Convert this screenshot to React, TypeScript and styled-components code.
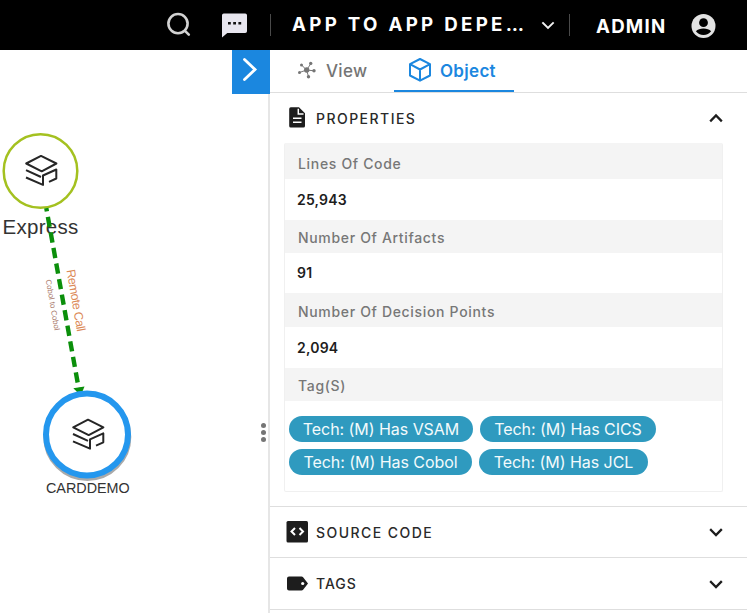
import React, { useState } from "react";
import styled, { createGlobalStyle } from "styled-components";

const GlobalStyle = createGlobalStyle`
  * { box-sizing: border-box; }
  body { margin: 0; background: #fff; font-family: Inter, "Open Sans", sans-serif; }
  svg { display: block; flex: none; }
  button { border: 0; padding: 0; background: none; font: inherit; color: inherit; }
`;

const Page = styled.div`
  width: 747px;
  height: 613px;
  display: flex;
  flex-direction: column;
  overflow: hidden;
`;

const TopBar = styled.header`
  flex: none;
  height: 50px;
  display: flex;
  align-items: center;
  padding-left: 165px;
  background: #000;
  color: #fff;
`;

const Separator = styled.span<{ $left: number; $right: number }>`
  width: 1px;
  height: 22px;
  margin: 0 ${(p) => p.$right}px 0 ${(p) => p.$left}px;
  background: #4a4a4a;
`;

const BarText = styled.span<{ $spacing: number; $width: number; $drop?: number }>`
  width: ${(p) => p.$width}px;
  padding-top: ${(p) => p.$drop ?? 0}px;
  font-size: 18.7px;
  font-weight: 700;
  line-height: 24px;
  letter-spacing: ${(p) => p.$spacing}px;
  white-space: nowrap;
`;

const Ellipsis = styled.span`
  letter-spacing: -0.2px;
`;

const ChatSlot = styled.span`
  margin-left: 29px;
`;

const Body = styled.main`
  flex: 1;
  min-height: 0;
  display: flex;
`;

const Canvas = styled.section`
  width: 232px;
  flex: none;
`;

const Gutter = styled.div`
  width: 38px;
  flex: none;
  display: flex;
  flex-direction: column;
  align-items: flex-end;
`;

const Collapse = styled.button`
  width: 38px;
  height: 44px;
  display: flex;
  align-items: center;
  justify-content: center;
  padding: 0 2px 4px 0;
  background: #1b87df;
`;

const Handle = styled.div`
  flex: 1;
  width: 15px;
  border-right: 2px solid #e6e6e6;
  padding: 329px 0 0 6px;
  display: flex;
  flex-direction: column;
  gap: 2px;
`;

const Dot = styled.i`
  width: 5px;
  height: 5px;
  flex: none;
  border-radius: 50%;
  background: #757575;
`;

const Panel = styled.aside`
  flex: 1;
  min-width: 0;
  display: flex;
  flex-direction: column;
`;

const Tabs = styled.nav`
  height: 43px;
  flex: none;
  display: flex;
  padding-left: 16px;
  border-bottom: 1px solid #dedede;
`;

const Tab = styled.button<{ $active?: boolean; $width: number }>`
  width: ${(p) => p.$width}px;
  height: 42px;
  display: flex;
  align-items: center;
  gap: ${(p) => (p.$active ? 8 : 9)}px;
  padding-left: ${(p) => (p.$active ? 14 : 11)}px;
  border-bottom: 2px solid ${(p) => (p.$active ? "#1b87df" : "transparent")};
  color: ${(p) => (p.$active ? "#1b87df" : "#757575")};
  font-size: 17px;
  font-weight: ${(p) => (p.$active ? 600 : 500)};
  letter-spacing: 0.3px;
`;

const TabText = styled.span`
  padding-top: 2px;
`;

const SectionHead = styled.button<{ $height: number; $ruled?: boolean }>`
  width: 100%;
  height: ${(p) => p.$height}px;
  flex: none;
  display: flex;
  align-items: center;
  padding: 0 24.5px 0 16px;
  border-top: ${(p) => (p.$ruled ? "1px solid #dedede" : "0")};
  color: #2a2a2a;
  text-align: left;
`;

const SectionIcon = styled.span`
  width: 30px;
  display: flex;
`;

const SectionTitle = styled.span<{ $spacing: number }>`
  flex: 1;
  font-size: 14px;
  font-weight: 500;
  letter-spacing: ${(p) => p.$spacing}px;
`;

const Table = styled.dl`
  width: 439px;
  height: 349px;
  flex: none;
  margin: 0 0 14px 14px;
  border: 1px solid #f0f0f0;
  border-top: 0;
  border-radius: 2px;
`;

const Label = styled.dt<{ $height: number }>`
  height: ${(p) => p.$height}px;
  padding-left: 13px;
  padding-bottom: 4px;
  display: flex;
  align-items: flex-end;
  line-height: 22px;
  background: #f4f4f4;
  color: #777;
  font-size: 14px;
  font-weight: 500;
  letter-spacing: 0.67px;
`;

const Value = styled.dd<{ $height: number }>`
  height: ${(p) => p.$height}px;
  margin: 0;
  padding: 0 0 0 12px;
  display: flex;
  align-items: center;
  color: #1d1d1d;
  font-size: 14px;
  font-weight: 600;
  letter-spacing: 0.2px;
`;

const TagList = styled.dd`
  margin: 0;
  padding: 15px 0 0 4px;
  display: grid;
  gap: 7px;
`;

const TagRow = styled.div`
  display: flex;
  gap: 7px;
`;

const Tag = styled.span<{ $width: number }>`
  width: ${(p) => p.$width}px;
  height: 26px;
  border-radius: 13px;
  background: #2f9abf;
  color: #f3fafc;
  font-size: 16px;
  line-height: 26px;
  letter-spacing: -0.05px;
  text-align: center;
  white-space: nowrap;
`;

const SearchIcon = () => (
  <svg width="28" height="28" viewBox="0 0 28 28" fill="none" stroke="#d2d2d2" strokeWidth="2.6" strokeLinecap="round">
    <circle cx="13" cy="12.6" r="9.6" />
    <path d="M20 19.800l3.800 3.800" />
  </svg>
);

const ChatIcon = () => (
  <svg width="25" height="25" viewBox="0 0 25 25">
    <path d="M1.8.5h21.4a1.8 1.8 0 0 1 1.8 1.8v15.9a1.8 1.8 0 0 1-1.8 1.8H5.3L0 24.4V2.300A1.800 1.800 0 0 1 1.800.500z" fill="#e8e6ef" />
    <path d="M6 9h2.800v2.500H6zM11.200 9H14v2.500h-2.800zM16.400 9h2.800v2.500h-2.800z" fill="#111" />
  </svg>
);

const UserIcon = () => (
  <svg width="25" height="25" viewBox="0 0 25 25">
    <circle cx="12.500" cy="13" r="12" fill="#e2e2e2" />
    <circle cx="12.500" cy="9.700" r="4.400" fill="#000" />
    <path d="M4.900 18.200C6.500 16.400 9.300 15.600 12.500 15.600s6 .8 7.600 2.600c-1.700 2.300-4.400 3.800-7.600 3.800s-5.900-1.500-7.600-3.800z" fill="#000" />
  </svg>
);

const Chevron = ({ up, size = 14, color = "#1d1d1d", weight = 2.3 }: { up?: boolean; size?: number; color?: string; weight?: number }) => (
  <svg width={size} height={10} viewBox="0 0 14 10" fill="none" stroke={color} strokeWidth={weight} strokeLinecap="square">
    <path d={up ? "M2 7.500l5-5 5 5" : "M2 3l5 5 5-5"} />
  </svg>
);

const HubIcon = () => (
  <svg width="20" height="18" viewBox="0 0 20 18" stroke="#757575" fill="#757575" strokeWidth="1">
    <path d="M9.500 9L4.600 4M9.500 9L14 2.500M9.500 9L2.500 11.500M9.500 9l7.500.8M9.500 9l2 6.500" />
    <g stroke="none">
      <circle cx="9.700" cy="9" r="2.700" />
      <circle cx="4.500" cy="4" r="1.500" />
      <circle cx="13.700" cy="2.400" r="1.700" />
      <circle cx="2.500" cy="11.500" r="1.500" />
      <circle cx="17" cy="9.800" r="1.700" />
      <circle cx="11.500" cy="15.700" r="1.700" />
    </g>
  </svg>
);

const CubeIcon = () => (
  <svg width="24" height="24" viewBox="0 0 24 24" fill="none" stroke="#1b87df" strokeWidth="2" strokeLinejoin="round">
    <path d="M12 1l10 5.200v11.300L12 22.700 2 17.500V6.200zM2 6.200l10 5.300 10-5.300M12 11.500v11.200" />
  </svg>
);

const FileIcon = () => (
  <svg width="22" height="22" viewBox="0 0 22 22">
    <path d="M4.800.3H13l6 6v12.700a1.600 1.600 0 0 1-1.600 1.600H4.800a1.600 1.600 0 0 1-1.600-1.600V1.900A1.600 1.600 0 0 1 4.800.3z" fill="#1d1d1d" />
    <path d="M12.300 1.800v5.200h5.200M7 11.200h8.500M7 15.200h8.500" fill="none" stroke="#fff" strokeWidth="1.500" />
  </svg>
);

const SourceIcon = () => (
  <svg width="22" height="22" viewBox="0 0 22 22">
    <rect x=".5" y="0" width="21.500" height="21.500" rx="1.500" fill="#1d1d1d" />
    <path d="M9 7L5.500 10.500 9 14M13.500 7L17 10.500l-3.500 3.500" fill="none" stroke="#fff" strokeWidth="2" />
  </svg>
);

const LabelIcon = () => (
  <svg width="22" height="16" viewBox="0 0 22 16">
    <path d="M3 .5h12.500c.7 0 1.200.3 1.600.8L22 7.500l-4.900 6.200c-.4.500-.9.800-1.600.8H3a2 2 0 0 1-2-2V2.500a2 2 0 0 1 2-2z" fill="#1d1d1d" />
    <circle cx="16.700" cy="7.500" r="1.600" fill="#fff" />
  </svg>
);

const StackGlyph = ({ x, y }: { x: number; y: number }) => (
  <g transform={`translate(${x} ${y})`} fill="none" stroke="#262626" strokeWidth="2" strokeLinejoin="round">
    <path d="M-14.800-7L0-14.600 15.400-7 .700.800z" />
    <path d="M-15-.300L0 6.500M-15 7L2 14.400V5L15.300-1V8L8 11.300" />
  </g>
);

const DependencyGraph = () => (
  <svg width="232" height="563" viewBox="0 50 232 563" fontFamily='"Liberation Sans", Arial, sans-serif'>
    <circle cx="40.500" cy="171" r="36.800" fill="#fff" stroke="#a4c120" strokeWidth="2.500" />
    <StackGlyph x={41} y={170.500} />
    <text x="2.600" y="234" fontSize="20.500" letterSpacing=".250" fill="#333">Express</text>
    <path d="M46.300 208.200L79 390" stroke="#0b8f0b" strokeWidth="4.400" strokeDasharray="10.300 5.500" strokeDashoffset="7" />
    <path d="M73.300 388.300l11.200-1.900-3.700 9z" fill="#0b8f0b" />
    <text transform="translate(66.500 270.300) rotate(80.200)" fontSize="12.300" textLength="62.500" fill="#dc8a58">Remote Call</text>
    <text transform="translate(45.800 280) rotate(80.200)" fontSize="7.800" fill="#a9796b">Cobol to Cobol</text>
    <circle cx="87.300" cy="437" r="41.500" fill="none" stroke="#aaa" strokeWidth="5" />
    <circle cx="87" cy="434.500" r="41" fill="#fff" stroke="#2497ee" strokeWidth="6" />
    <StackGlyph x={88} y={434.300} />
    <text x="46" y="492.800" fontSize="14.350" fill="#333">CARDDEMO</text>
  </svg>
);

const metrics = [
  { label: "Lines Of Code", value: "25,943", head: 36, body: 40.5 },
  { label: "Number Of Artifacts", value: "91", head: 33, body: 40.5 },
  { label: "Number Of Decision Points", value: "2,094", head: 34, body: 41 },
];

export default function App() {
  const [tab, setTab] = useState("Object");
  return (
    <Page>
      <GlobalStyle />
      <TopBar>
        <SearchIcon />
        <ChatSlot><ChatIcon /></ChatSlot>
        <Separator $left={23} $right={21} />
        <BarText $spacing={3.3} $width={248}>APP TO APP DEPE<Ellipsis>...</Ellipsis></BarText>
        <Chevron size={16} color="#f2f2f2" weight={1.9} />
        <Separator $left={13} $right={26} />
        <BarText $spacing={1.2} $width={95} $drop={3}>ADMIN</BarText>
        <UserIcon />
      </TopBar>
      <Body>
        <Canvas><DependencyGraph /></Canvas>
        <Gutter>
          <Collapse aria-label="Collapse panel">
            <svg width="16" height="24" viewBox="0 0 16 24" fill="none" stroke="#fff" strokeWidth="2.800" strokeLinecap="round">
              <path d="M2.500 1.500L13 11.500 2.500 21.500" />
            </svg>
          </Collapse>
          <Handle><Dot /><Dot /><Dot /></Handle>
        </Gutter>
        <Panel>
          <Tabs>
            <Tab $width={108} $active={tab === "View"} onClick={() => setTab("View")}><HubIcon /><TabText>View</TabText></Tab>
            <Tab $width={120} $active={tab === "Object"} onClick={() => setTab("Object")}><CubeIcon /><TabText>Object</TabText></Tab>
          </Tabs>
          <SectionHead $height={50}>
            <SectionIcon><FileIcon /></SectionIcon>
            <SectionTitle $spacing={1.46}>PROPERTIES</SectionTitle>
            <Chevron up />
          </SectionHead>
          <Table>
            {metrics.map((m) => (
              <React.Fragment key={m.label}>
                <Label $height={m.head}>{m.label}</Label>
                <Value $height={m.body}>{m.value}</Value>
              </React.Fragment>
            ))}
            <Label $height={33}>Tag(S)</Label>
            <TagList>
              <TagRow>
                <Tag $width={184}>Tech: (M) Has VSAM</Tag>
                <Tag $width={176}>Tech: (M) Has CICS</Tag>
              </TagRow>
              <TagRow>
                <Tag $width={183}>Tech: (M) Has Cobol</Tag>
                <Tag $width={169}>Tech: (M) Has JCL</Tag>
              </TagRow>
            </TagList>
          </Table>
          <SectionHead $height={51} $ruled>
            <SectionIcon><SourceIcon /></SectionIcon>
            <SectionTitle $spacing={1.46}>SOURCE CODE</SectionTitle>
            <Chevron />
          </SectionHead>
          <SectionHead $height={52} $ruled>
            <SectionIcon><LabelIcon /></SectionIcon>
            <SectionTitle $spacing={1.0}>TAGS</SectionTitle>
            <Chevron />
          </SectionHead>
          <SectionHead $height={51} $ruled aria-hidden />
        </Panel>
      </Body>
    </Page>
  );
}
